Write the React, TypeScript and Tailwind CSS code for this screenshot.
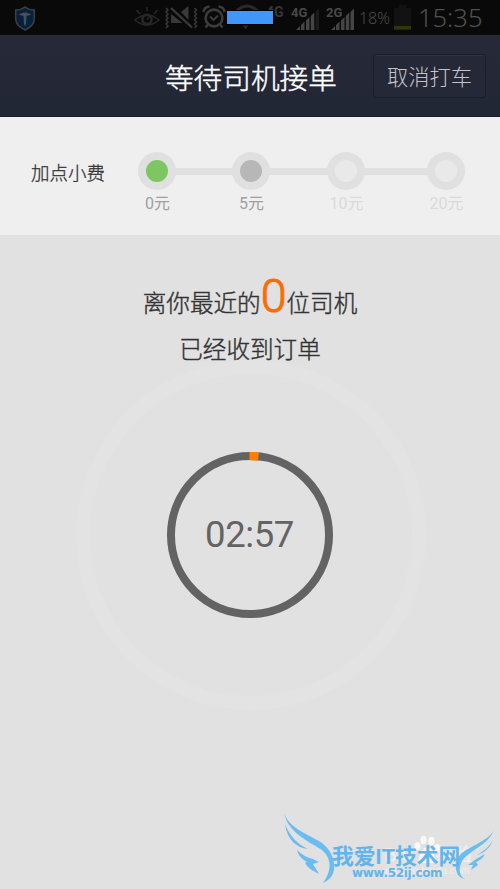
import clsx from "clsx";

const tips = [
  { label: "0元", dot: "bg-[#7dc662]", text: "text-[#a0a0a0]" },
  { label: "5元", dot: "bg-[#b7b7b7]", text: "text-[#a0a0a0]" },
  { label: "10元", dot: "bg-[#e9e9e9]", text: "text-[#dadada]" },
  { label: "20元", dot: "bg-[#e9e9e9]", text: "text-[#dadada]" },
];

function ShieldIcon() {
  return (
    <svg width="22" height="25" viewBox="0 0 22 25">
      <path
        d="M11 1 Q15 4 20.3 4 V13 Q20 20 11 24 Q2 20 1.7 13 V4 Q7 4 11 1Z"
        fill="#08203f"
        stroke="#3d4042"
        strokeWidth="1.5"
      />
      <path
        d="M4.5 8 Q8 7.8 9.7 6.5 H12.3 Q14 7.8 17.5 8 Q15.5 10 12.5 9.8 L12 18 L11 20 L10 18 L9.5 9.8 Q6.5 10 4.5 8Z"
        fill="#4b5054"
      />
    </svg>
  );
}

function EyeIcon() {
  return (
    <svg width="26" height="22" viewBox="0 0 26 22" fill="none" stroke="#272727">
      <path d="M1 14 Q13 4 25 14 Q13 24 1 14Z" strokeWidth="1.6" />
      <circle cx="13" cy="13.5" r="4.6" strokeWidth="2.6" />
      <path d="M13 13.5 L15.5 11" strokeWidth="1.5" />
      <path d="M13 1 V5 M2.5 4 L6 8 M23.5 4 L20 8" strokeWidth="1.6" />
    </svg>
  );
}

function VibrateMuteIcon() {
  return (
    <svg width="33" height="24" viewBox="0 0 33 24">
      <path
        d="M1 2 L3 4 L1 6 L3 8 L1 10 L3 12 L1 14 L3 16 L1 18 L3 20 L1 22 M29.5 2 L31.5 4 L29.5 6 L31.5 8 L29.5 10 L31.5 12 L29.5 14 L31.5 16 L29.5 18 L31.5 20 L29.5 22"
        fill="none"
        stroke="#393939"
        strokeWidth="1.5"
      />
      <path d="M6 8 V17 H17.500Z M16 6 L23.500 0 V14Z" fill="#393939" />
      <path d="M6 2 L27 21.500" stroke="#0a0a0a" strokeWidth="4.5" />
      <path d="M6 2 L27 21.500" stroke="#393939" strokeWidth="2.3" />
    </svg>
  );
}

function AlarmIcon() {
  return (
    <svg width="24" height="24" viewBox="0 0 24 24" fill="none" stroke="#3c3c3c">
      <circle cx="12" cy="13" r="8.4" strokeWidth="2.6" />
      <path d="M8 11.5 L11.5 15 L16 10.5" strokeWidth="2" />
      <path d="M1.5 7 Q2 2 7.5 1.5 M22.5 7 Q22 2 16.5 1.5" strokeWidth="2.6" />
      <path d="M6 19.5 L3.5 22.5 M18 19.5 L20.5 22.5" strokeWidth="2.5" />
    </svg>
  );
}

function WifiIcon() {
  return (
    <svg width="26" height="26" viewBox="0 0 26 26" fill="none" stroke="#292929">
      <path d="M1 8.5 Q13 -4.5 25 8.5" strokeWidth="3" />
      <path d="M6 13.5 Q13 6 20 13.5" strokeWidth="3" />
      <path d="M8.5 21.5 H14.5 L11.5 25.5Z" fill="#292929" stroke="none" />
    </svg>
  );
}

function Signal({ name, full }: { name: string; full?: boolean }) {
  return (
    <div className="relative h-[24px] w-[29px]">
      <svg className="absolute right-0 bottom-0" width="24" height="22" viewBox="0 0 24 22">
        <path d="M0 22 L4 18 V22Z M5 17 L8.500 13.500 V22 H5Z M10 12.500 L13.500 9 V22 H10Z M14.800 8 L18.300 4.500 V22 H14.800Z" fill="#454545" />
        <path d="M19.5 4 L23 0.5 V22 H19.5Z" fill={full ? "#454545" : "#1b1b1b"} />
      </svg>
      <span className="absolute top-0 left-0 font-['Roboto'] text-[13px] leading-[13px] font-bold text-[#494949] [text-shadow:1px_1px_0_#0a0a0a]">
        {name}
      </span>
    </div>
  );
}

function StatusBar() {
  return (
    <div className="relative flex h-[35px] items-start bg-[#090909] pl-[14px]">
      <div className="mt-[6px]"><ShieldIcon /></div>
      <div className="mt-[6px] ml-[98px]"><EyeIcon /></div>
      <div className="mt-[6px] ml-[5px]"><VibrateMuteIcon /></div>
      <div className="mt-[5px] ml-[4px]"><AlarmIcon /></div>
      <div className="mt-[4px] ml-[8px]"><WifiIcon /></div>
      <span className="mt-[5px] ml-[6px] w-[18px] font-['Roboto'] text-[14px] leading-[14px] font-bold text-[#363636]">
        4G
      </span>
      <div className="mt-[6px] ml-[7px]"><Signal name="4G" /></div>
      <div className="mt-[6px] ml-[6px]"><Signal name="2G" full /></div>
      <span className="mt-[9px] ml-[4px] w-[32px] font-['Noto_Sans'] text-[16px] leading-[18px] font-light tracking-[-0.1px] text-[#4a4a4a]">
        18%
      </span>
      <svg className="mt-[5px] ml-[3px]" width="17" height="25" viewBox="0 0 17 25">
        <path d="M5 0 H12 V3 H17 V25 H0 V3 H5Z" fill="#121212" />
        <path d="M0 21 H17 V24.5 H0Z" fill="#2b3a00" />
      </svg>
      <span className="mt-[4px] ml-[7px] font-['Noto_Sans'] text-[25.5px] leading-[26px] font-light whitespace-nowrap text-[#505050]">
        15:35
      </span>
      {/* pill covering the wifi indicator */}
      <div className="absolute top-[10px] left-[226px] h-[15px] w-[48px] border border-black bg-[#4197f8]" />
    </div>
  );
}

function Header() {
  return (
    <header className="flex h-[82px] justify-end border-t border-b border-t-[#2d2d3a] border-b-[#1a1d28] bg-linear-to-b from-[#272937] to-[#222735] font-['Noto_Sans_CJK_SC',sans-serif] font-light">
      <h1 className="mt-[22px] mr-[36px] text-[28.7px] leading-[38px] whitespace-nowrap text-white [-webkit-text-stroke:0.4px_#ffffff]">
        等待司机接单
      </h1>
      <button className="mt-[18px] mr-[14px] h-[44px] w-[113px] rounded-[3px] border border-[#1b1f2b] bg-[#242837] text-[21.3px] leading-[40px] text-[#c4c4c8] shadow-[inset_0_1px_0_#30323f]">
        取消打车
      </button>
    </header>
  );
}

function TipBar() {
  return (
    <section className="flex h-[118px] bg-[#efefef] font-['Roboto','Noto_Sans_CJK_SC',sans-serif]">
      <span className="mt-[43px] ml-[31px] w-[76px] text-[18.5px] leading-[28px] font-light whitespace-nowrap text-[#333333] [-webkit-text-stroke:0.3px_#333333]">
        加点小费
      </span>
      <div className="relative mt-[35px] ml-[31px] grid h-[60px] w-[327px] grid-cols-[94px_95px_100px_38px]">
        <div className="absolute top-[16px] left-[20px] h-[7px] w-[288px] bg-[#e0e0e0]" />
        {tips.map((tip) => (
          <div key={tip.label} className="relative flex w-[38px] flex-col items-center">
            <div className="flex size-[38px] items-center justify-center rounded-full bg-[#e0e0e0]">
              <div className={clsx("size-[22px] rounded-full", tip.dot)} />
            </div>
            <span className={clsx("mt-[2px] ml-[1px] text-[16px] leading-[23px] whitespace-nowrap", tip.text)}>
              {tip.label}
            </span>
          </div>
        ))}
      </div>
    </section>
  );
}

function Countdown() {
  return (
    <div className="mt-[-7px] ml-[1px] flex size-[350px] items-center justify-center rounded-full border-[14px] border-[#e3e3e3]">
      <div className="relative mr-[2px] flex size-[166px] items-center justify-center">
        <svg className="absolute inset-0" width="166" height="166" viewBox="0 0 166 166" fill="none">
          <circle cx="83" cy="83" r="79" stroke="#636363" strokeWidth="8" />
          <path d="M82.500 4 A79 79 0 0 1 91.500 4.500" stroke="#ff8000" strokeWidth="8.6" />
        </svg>
        <span className="font-['Roboto'] text-[36.5px] leading-[44px] font-normal tracking-[-0.4px] text-[#636363]">
          02:57
        </span>
      </div>
    </div>
  );
}

function Watermark() {
  return (
    <div className="absolute right-0 bottom-0 h-[109px] w-[230px]">
      <div className="absolute top-[63px] left-[114px] flex items-center font-['Liberation_Sans','Noto_Sans_CJK_SC',sans-serif] text-[18px] leading-[24px] font-bold whitespace-nowrap text-[#eeeeee]">
        Bai
        <span className="ml-[24px]">经验</span>
      </div>
      <span className="absolute top-[83px] left-[115px] font-['Liberation_Sans'] text-[10.5px] leading-[14px] whitespace-nowrap text-[#eeeeee]">
        jingyan.baidu.com
      </span>
      <svg className="absolute inset-0" width="230" height="109" viewBox="0 0 230 109">
        <g fill="#f8f8f8">
          <ellipse cx="147.500" cy="66" rx="3" ry="4" />
          <ellipse cx="153.500" cy="60" rx="3" ry="4.200" />
          <ellipse cx="161.500" cy="61" rx="3.200" ry="4.200" />
          <ellipse cx="167" cy="68" rx="3" ry="4" />
          <path d="M157 67 Q162 68 164 75 Q168 82 162 83 H152 Q146 82 150 75 Q153 67 157 67Z" />
        </g>
        <g fill="#6bbcf0">
          <path d="M14 33 C18 46 34 53 49 61 C66 71 71 96 53 103 C61 92 63 80 52 70 C40 62 18 53 14 33Z" />
          <path d="M15 44 C20 57 29 65 38 69 C27 68 17 60 15 44Z" />
          <path d="M27 70 Q34 77 43 79 L49 82 L43 84 L49 94 Q38 89 35 83 L37 82 Q29 78 27 70Z" />
          <path d="M224 50 C221 60 208 67 199 74 C188 81 187 95 195 99 C184 97 184 83 190 75 C199 66 219 61 224 50Z" />
          <path d="M223 60 C220 68 214 73 207 75 C214 71 219 67 223 60Z" />
          <path d="M215 74 Q212 80 206 82 L208 85 L201 90 L203 85 L198 85 Q205 79 215 74Z" />
        </g>
      </svg>
      <span className="absolute top-[63px] left-[62px] font-['Liberation_Sans','Noto_Sans_CJK_SC',sans-serif] text-[21.8px] leading-[28px] font-bold whitespace-nowrap text-[#62b5ec]">
        我爱IT技术网
      </span>
      <span className="absolute top-[86px] left-[82px] font-['DejaVu_Sans'] text-[12px] leading-[15px] font-bold tracking-[-0.35px] whitespace-nowrap text-[#62b5ec]">
        www.52ij.com
      </span>
    </div>
  );
}

function App() {
  return (
    <div className="relative flex h-[889px] w-[500px] flex-col overflow-hidden bg-[#e1e1e1]">
      <StatusBar />
      <Header />
      <TipBar />
      <main className="flex flex-1 flex-col items-center font-['Noto_Sans_CJK_SC',sans-serif] text-[23.6px] font-light text-[#333333]">
        <p className="mt-[35px] flex h-[52px] items-baseline leading-[52px] whitespace-nowrap [-webkit-text-stroke:0.4px_#333333]">
          离你最近的
          <span className="font-['Roboto'] text-[46.500px] text-[#ff6b00] [-webkit-text-stroke:1px_#ff6b00]">0</span>
          位司机
        </p>
        <p className="mt-[7px] leading-[38px] [-webkit-text-stroke:0.4px_#333333]">已经收到订单</p>
        <Countdown />
      </main>
      <Watermark />
    </div>
  );
}

export default App;
